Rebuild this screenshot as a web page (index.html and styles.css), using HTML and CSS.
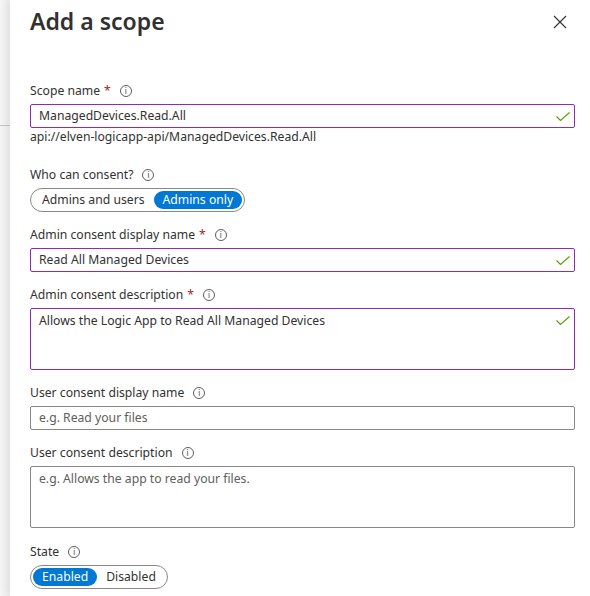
FILE: index.html
```html
<!DOCTYPE html>
<html lang="en">
<head>
<meta charset="utf-8">
<title>Add a scope</title>
<link rel="stylesheet" href="styles.css">
</head>
<body>
<div class="layout">
  <div class="backdrop"><div class="backdrop-rule"></div></div>
  <section class="panel">
    <header class="panel-header">
      <h1 class="panel-title">Add a scope</h1>
      <button class="close-btn" aria-label="Close">
        <svg width="14" height="14" viewBox="0 0 14 14"><path d="M1 1 L13 13 M13 1 L1 13" stroke="#323130" stroke-width="1.1" fill="none"/></svg>
      </button>
    </header>

    <div class="field field-first">
      <div class="label">Scope name <span class="req">*</span><span class="info">i</span></div>
      <div class="input valid"><span class="value">ManagedDevices.Read.All</span>
        <svg class="check" width="14" height="10" viewBox="0 0 14 10"><path d="M0.5 4.5 L4.5 8.5 L13.5 0.5" stroke="#57a300" stroke-width="1.2" fill="none"/></svg>
      </div>
      <div class="uri">api://elven-logicapp-api/ManagedDevices.Read.All</div>
    </div>

    <div class="field field-consent">
      <div class="label">Who can consent?<span class="info">i</span></div>
      <div class="toggle">
        <span class="seg">Admins and users</span>
        <span class="seg on">Admins only</span>
      </div>
    </div>

    <div class="field">
      <div class="label">Admin consent display name <span class="req">*</span><span class="info">i</span></div>
      <div class="input valid"><span class="value">Read All Managed Devices</span>
        <svg class="check" width="14" height="10" viewBox="0 0 14 10"><path d="M0.5 4.5 L4.5 8.5 L13.5 0.5" stroke="#57a300" stroke-width="1.2" fill="none"/></svg>
      </div>
    </div>

    <div class="field">
      <div class="label">Admin consent description <span class="req">*</span><span class="info">i</span></div>
      <div class="input area valid"><span class="value">Allows the Logic App to Read All Managed Devices</span>
        <svg class="check" width="14" height="10" viewBox="0 0 14 10"><path d="M0.5 4.5 L4.5 8.5 L13.5 0.5" stroke="#57a300" stroke-width="1.2" fill="none"/></svg>
      </div>
    </div>

    <div class="field">
      <div class="label">User consent display name<span class="info">i</span></div>
      <div class="input"><span class="placeholder">e.g. Read your files</span></div>
    </div>

    <div class="field">
      <div class="label">User consent description<span class="info">i</span></div>
      <div class="input area"><span class="placeholder">e.g. Allows the app to read your files.</span></div>
    </div>

    <div class="field field-state">
      <div class="label">State<span class="info">i</span></div>
      <div class="toggle">
        <span class="seg on">Enabled</span>
        <span class="seg">Disabled</span>
      </div>
    </div>
  </section>
</div>
</body>
</html>
```

FILE: styles.css
```css
* { box-sizing: border-box; }

html, body {
  margin: 0;
  padding: 0;
  background: #ffffff;
}

body {
  font-family: "Noto Sans", "Open Sans", "Liberation Sans", sans-serif;
  font-size: 12.2px;
  color: #323130;
  width: 590px;
  height: 596px;
  overflow: hidden;
}

.layout {
  display: flex;
  height: 596px;
}

/* dimmed page behind the side panel */
.backdrop {
  width: 10px;
  flex: 0 0 10px;
  background: linear-gradient(to right, #f6f6f6, #eeeeee);
  padding-top: 125px;
}

.backdrop-rule {
  height: 1px;
  background: #c8c6c4;
}

.panel {
  flex: 1;
  background: #ffffff;
  box-shadow: -4px 0 8px rgba(0, 0, 0, 0.06);
  padding: 0 15px 0 20px;
}

.panel-header {
  display: flex;
  justify-content: space-between;
  align-items: flex-start;
  height: 48px;
}

.panel-title {
  margin: 0;
  padding-top: 5px;
  font-size: 23px;
  font-weight: 600;
  line-height: 32px;
  color: #323130;
}

.close-btn {
  background: none;
  border: 0;
  padding: 0;
  margin: 15px 8px 0 0;
  width: 14px;
  height: 14px;
  cursor: pointer;
}

.close-btn svg { display: block; }

.field {
  display: flex;
  flex-direction: column;
  margin-top: 13px;
}

.field-first { margin-top: 33px; }
.field-consent { margin-top: 19px; }
.field-state { margin-top: 14px; }

.label {
  display: flex;
  align-items: center;
  height: 20px;
  line-height: 20px;
  margin-bottom: 3px;
}

.req {
  color: #a4262c;
  margin-left: 4px;
}

.info {
  display: inline-flex;
  align-items: center;
  justify-content: center;
  width: 12px;
  height: 12px;
  margin-left: 9px;
  border: 1px solid #605e5c;
  border-radius: 50%;
  font-size: 9px;
  line-height: 1;
  color: #605e5c;
  font-family: "DejaVu Sans", sans-serif;
}

.input {
  position: relative;
  display: flex;
  align-items: center;
  height: 24px;
  border: 1px solid #8a8886;
  border-radius: 2px;
  padding: 0 8px;
}

.input.valid { border-color: #8e2cb0; }

.input.area {
  height: 62px;
  align-items: flex-start;
  padding-top: 2px;
}

.value { color: #323130; line-height: 20px; }
.placeholder { color: #605e5c; line-height: 20px; }

.check {
  position: absolute;
  right: 4px;
  top: 7px;
}

.uri {
  line-height: 18px;
  margin-top: 0;
}

.toggle {
  display: inline-flex;
  align-self: flex-start;
  align-items: center;
  height: 24px;
  padding: 0 2px;
  border: 1px solid #8a8886;
  border-radius: 12px;
}

.seg {
  height: 18px;
  line-height: 18px;
  padding: 0 9px;
  border-radius: 9px;
  white-space: nowrap;
}

.seg.on {
  background: #0078d4;
  color: #ffffff;
}
```
